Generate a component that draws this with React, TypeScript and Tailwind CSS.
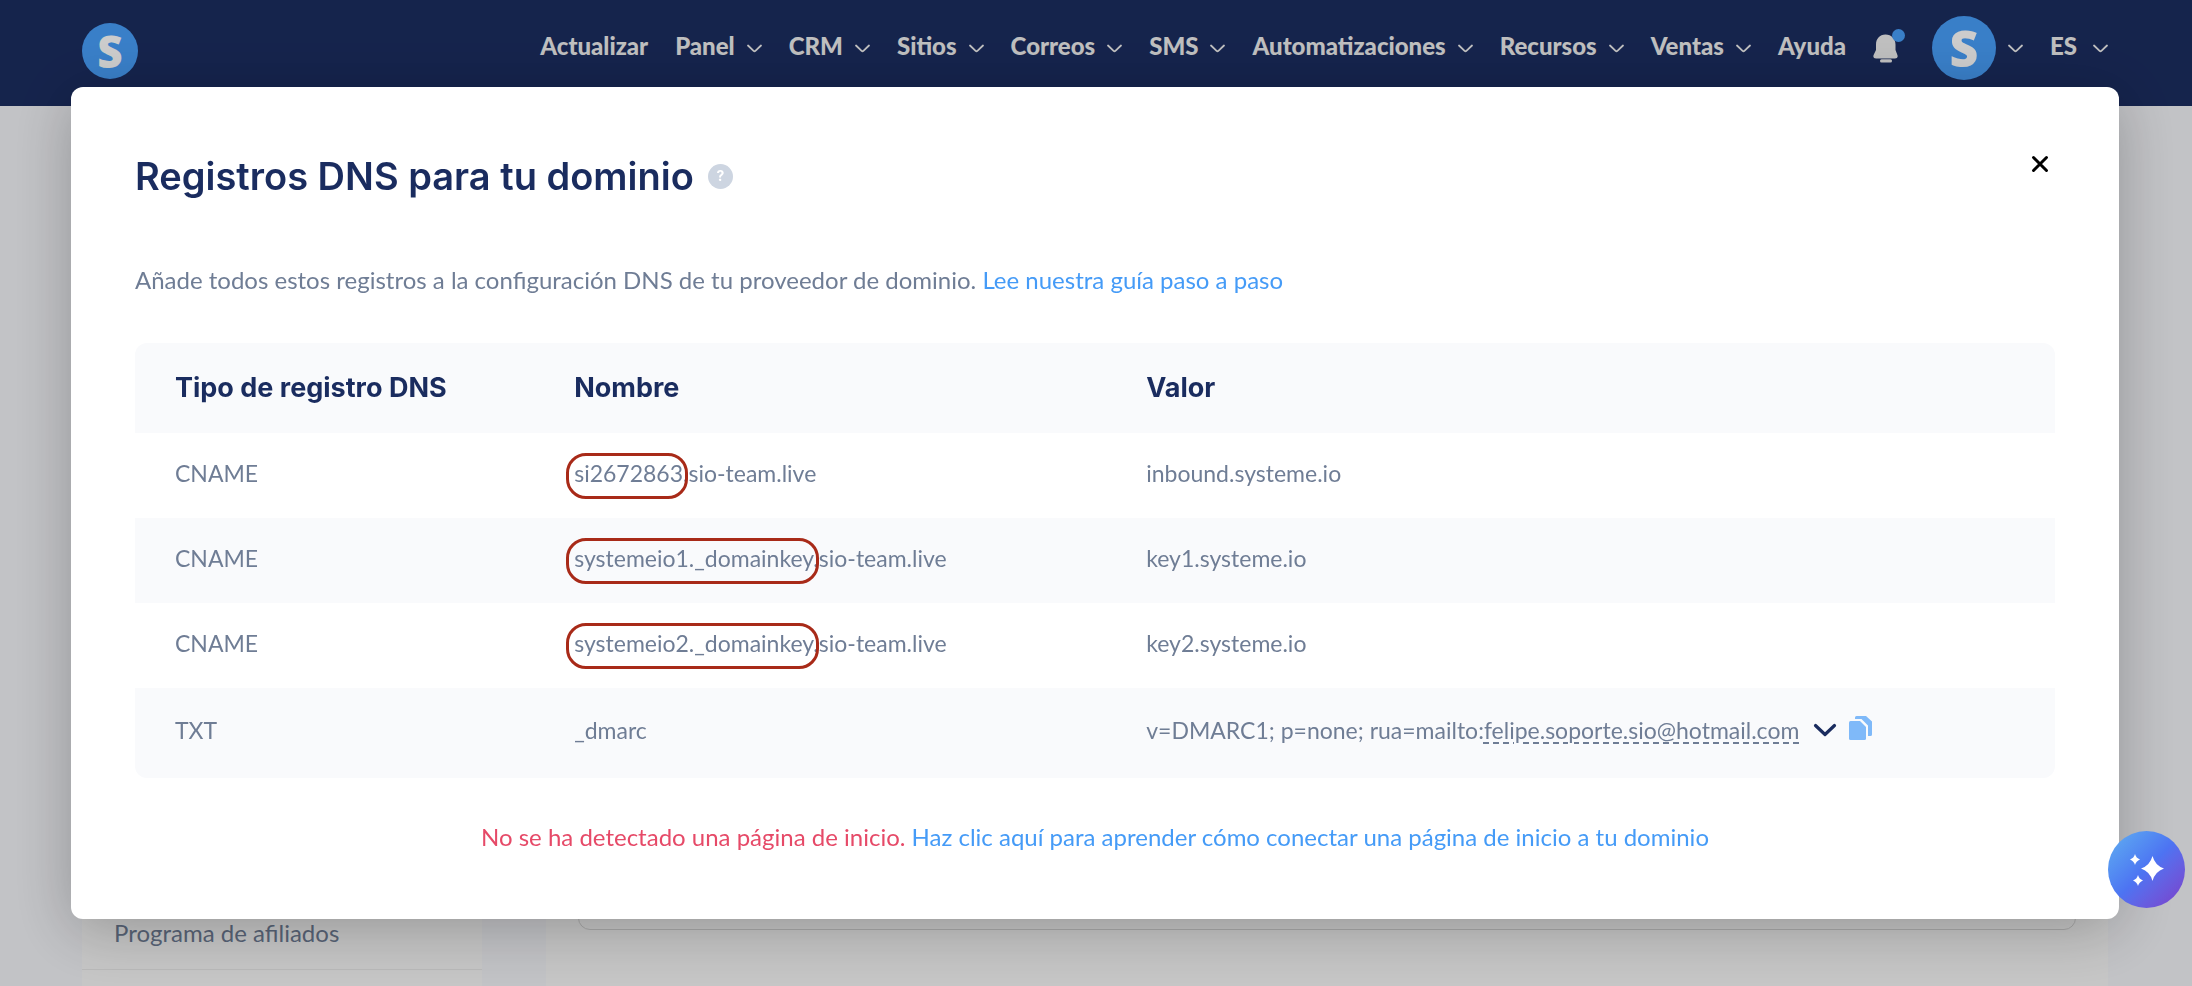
import { useState } from 'react';

const navItems = [
  { label: 'Actualizar', menu: false },
  { label: 'Panel', menu: true },
  { label: 'CRM', menu: true },
  { label: 'Sitios', menu: true },
  { label: 'Correos', menu: true },
  { label: 'SMS', menu: true },
  { label: 'Automatizaciones', menu: true },
  { label: 'Recursos', menu: true },
  { label: 'Ventas', menu: true },
  { label: 'Ayuda', menu: false },
];

const records = [
  { type: 'CNAME', marked: 'si2672863.', name: 'sio-team.live', value: 'inbound.systeme.io' },
  { type: 'CNAME', marked: 'systemeio1._domainkey.', name: 'sio-team.live', value: 'key1.systeme.io' },
  { type: 'CNAME', marked: 'systemeio2._domainkey.', name: 'sio-team.live', value: 'key2.systeme.io' },
  { type: 'TXT', marked: '', name: '_dmarc', value: 'v=DMARC1; p=none; rua=mailto:' },
];

function NavChevron() {
  return (
    <svg width="15" height="9" viewBox="0 0 15 9" fill="none" className="shrink-0">
      <path d="M1 1.5 L6.6 6.9 Q7.5 7.7 8.4 6.9 L14 1.5" stroke="currentColor" strokeWidth="1.8" strokeLinecap="round" />
    </svg>
  );
}

function BellIcon() {
  return (
    <svg width="32" height="34" viewBox="0 0 32 34" className="shrink-0">
      <path
        d="M12.5 5.500C6.500 5.500 3 10 3 15.500V21L0.600 26Q-0.500 29.500 3 29.500H22Q25.500 29.500 24.400 26L22.500 21V15.500C22.500 10 18.500 5.500 12.500 5.500Z"
        fill="#efefef"
      />
      <rect x="7" y="30.300" width="12" height="3.200" rx="1.500" fill="#efefef" />
      <circle cx="25.500" cy="6.500" r="6.500" fill="#489ffa" />
    </svg>
  );
}

function Header() {
  return (
    <header className="flex h-[106px] items-start justify-between bg-[#1b2d60] pr-[84px] pl-[82px]">
      <a
        href="#inicio"
        className="mt-[23px] flex size-14 items-center justify-center rounded-full bg-[#489ffa] font-['Open_Sans',sans-serif] text-[44px] leading-none font-extrabold text-white"
      >
        S
      </a>
      <nav className="flex h-24 items-center gap-[27px] font-['Lato',sans-serif] text-2xl font-black text-[#efefef]">
        {navItems.map(item => (
          <button key={item.label} type="button" className="flex items-center gap-3">
            <span className="pb-1">{item.label}</span>
            {item.menu && <NavChevron />}
          </button>
        ))}
        <button type="button" aria-label="Notificaciones" className="pb-1">
          <BellIcon />
        </button>
        <button type="button" className="flex items-center gap-3">
          <span className="flex size-16 items-center justify-center rounded-full bg-[#489ffa] font-['Open_Sans',sans-serif] text-[50px] leading-none font-extrabold text-white">
            S
          </span>
          <NavChevron />
        </button>
        <button type="button" className="flex items-center gap-4">
          <span className="pb-1">ES</span>
          <NavChevron />
        </button>
      </nav>
    </header>
  );
}

function DnsTable() {
  return (
    <table className="w-full table-fixed border-separate border-spacing-0 overflow-hidden rounded-xl text-left">
      <thead>
        <tr className="h-[90px] bg-[#f9fafc] font-['Inter',sans-serif] text-[27px] text-[#1a2c5f]">
          <th className="w-[21%] pl-10 font-bold">Tipo de registro DNS</th>
          <th className="w-[30%] pl-9 font-bold">Nombre</th>
          <th className="pl-8 font-bold">Valor</th>
        </tr>
      </thead>
      <tbody className="text-[23px] leading-9">
        {records.map(record => (
          <tr key={record.value} className="h-[85px] last:h-[90px] even:bg-[#f9fafc]">
            <td className="pb-1.5 pl-10">{record.type}</td>
            <td className="pb-1.5 pl-9">
              {record.marked && (
                <span className="relative inline-block">
                  {record.marked}
                  <span className="absolute -top-0.5 right-0 -bottom-2 -left-2 rounded-[20px] border-3 border-[#a82a18]" />
                </span>
              )}
              {record.name}
            </td>
            <td className="pb-1.5 pl-8">
              {record.type === 'TXT' ? (
                <div className="flex items-center">
                  <span>{record.value}</span>
                  <span className="underline decoration-dashed decoration-2 underline-offset-3">
                    felipe.soporte.sio@hotmail.com
                  </span>
                  <button type="button" aria-label="Ver opciones" className="ml-3.5">
                    <svg width="24" height="16" viewBox="0 0 24 16" fill="none">
                      <path d="M2.500 3.500 L12 12.500 L21.500 3.500" stroke="#1a2c5f" strokeWidth="3.200" strokeLinecap="round" strokeLinejoin="round" />
                    </svg>
                  </button>
                  <button type="button" aria-label="Copiar" className="ml-3 pb-1">
                    <svg width="24" height="26" viewBox="0 0 24 26" fill="#7fb9f9">
                      <path d="M1.500 6H11L17 12V23.500Q17 25 15.500 25H1.500Q0 25 0 23.500V7.500Q0 6 1.500 6Z" />
                      <path d="M6 4V2.500Q6 1 7.500 1H17L23 6.500V19.500Q23 21 21.500 21H19V10.500L12.500 4Z" />
                    </svg>
                  </button>
                </div>
              ) : (
                record.value
              )}
            </td>
          </tr>
        ))}
      </tbody>
    </table>
  );
}

export default function App() {
  const [open, setOpen] = useState(true);

  return (
    <div className="flex h-screen flex-col overflow-hidden bg-[#f3f4f8] font-['Lato',sans-serif] text-2xl text-[#6f7d95]">
      <Header />

      <main className="flex flex-1 gap-16 pr-[84px] pl-[82px]">
        <aside className="flex w-[400px] flex-col justify-end bg-[#f8f8f8] pb-4">
          <a href="#afiliados" className="border-b border-[#e8e8e8] px-8 pb-5">
            Programa de afiliados
          </a>
        </aside>
        <section className="flex flex-1 flex-col bg-[#f8f8f8] px-8 pb-14">
          <div className="flex-1 rounded-xl border border-[#d4d4d4]" />
        </section>
      </main>

      {open && (
        <div className="fixed inset-0 bg-black/20 pt-[87px] pr-[73px] pl-[71px]">
          <div role="dialog" className="rounded-xl bg-white px-16 pt-16 pb-[66px] shadow-[0_10px_60px_rgba(0,0,0,0.25)]">
            <div className="flex items-start justify-between">
              <h1 className="flex items-center gap-3.5 font-['Inter',sans-serif] text-[38px] leading-[50px] font-semibold text-[#1a2c5f]">
                Registros DNS para tu dominio
                <span className="flex size-[25px] items-center justify-center rounded-full bg-[#cdd5e1] text-sm leading-none font-bold text-white">
                  ?
                </span>
              </h1>
              <button type="button" aria-label="Cerrar" onClick={() => setOpen(false)} className="mt-1 mr-1.5">
                <svg width="18" height="18" viewBox="0 0 18 18" fill="none">
                  <path d="M2.500 2.500 L15.500 15.500 M15.500 2.500 L2.500 15.500" stroke="#000" strokeWidth="3" strokeLinecap="round" />
                </svg>
              </button>
            </div>

            <p className="mt-[63px] mb-[47px] leading-8">
              Añade todos estos registros a la configuración DNS de tu proveedor de dominio.{' '}
              <a href="#guia" className="text-[#459bf7]">
                Lee nuestra guía paso a paso
              </a>
            </p>

            <DnsTable />

            <p className="mt-[43px] text-center leading-8 text-[#e64a68]">
              No se ha detectado una página de inicio.{' '}
              <a href="#conectar" className="text-[#459bf7]">
                Haz clic aquí para aprender cómo conectar una página de inicio a tu dominio
              </a>
            </p>
          </div>
        </div>
      )}

      <button
        type="button"
        aria-label="Asistente"
        className="fixed right-[7px] bottom-[78px] flex size-[77px] items-center justify-center rounded-full bg-linear-to-br from-[#62b0f0] via-[#4d73f2] to-[#7a3cc8]"
      >
        <svg width="34" height="32" viewBox="0 0 34 32" fill="#fff">
          <path d="M22.500 2Q25 11.500 34 14.500Q25 17.500 22.500 27Q20 17.500 11 14.500Q20 11.500 22.500 2Z" />
          <path d="M5 0Q6 4 10 5.500Q6 7 5 11Q4 7 0 5.500Q4 4 5 0Z" />
          <path d="M8 21Q9 25 13 26.500Q9 28 8 32Q7 28 3 26.500Q7 25 8 21Z" />
        </svg>
      </button>
    </div>
  );
}
